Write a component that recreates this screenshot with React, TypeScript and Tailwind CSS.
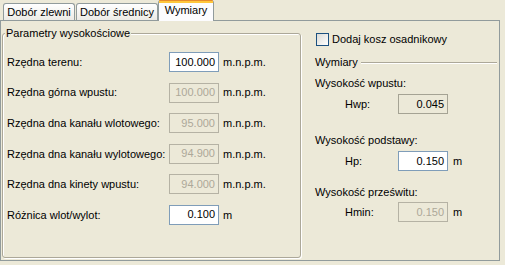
import React from "react";

const Field = ({ value, mode }: { value: string; mode: "edit" | "disabled" | "readonly" }) => {
  const cls =
    mode === "edit"
      ? "bg-white border-[#7F9DB9] text-black"
      : mode === "readonly"
      ? "bg-[#ECE9D8] border-[#A5A394] text-black"
      : "bg-[#ECE9D8] border-[#B5B2A4] text-[#ACA899]";
  return (
    <div className={`w-[50px] h-[20px] border flex items-center justify-end pr-[3px] leading-none ${cls}`}>
      {value}
    </div>
  );
};

const leftRows: { label: string; value: string; mode: "edit" | "disabled"; unit: string }[] = [
  { label: "Rzędna terenu:", value: "100.000", mode: "edit", unit: "m.n.p.m." },
  { label: "Rzędna górna wpustu:", value: "100.000", mode: "disabled", unit: "m.n.p.m." },
  { label: "Rzędna dna kanału wlotowego:", value: "95.000", mode: "disabled", unit: "m.n.p.m." },
  { label: "Rzędna dna kanału wylotowego:", value: "94.900", mode: "disabled", unit: "m.n.p.m." },
  { label: "Rzędna dna kinety wpustu:", value: "94.000", mode: "disabled", unit: "m.n.p.m." },
  { label: "Różnica wlot/wylot:", value: "0.100", mode: "edit", unit: "m" },
];

export default function App() {
  return (
    <div className="w-[505px] h-[265px] bg-[#ECE9D8] text-[11px] text-black [font-family:'Liberation_Sans',Arial,sans-serif] overflow-hidden">
      {/* Tab strip */}
      <div className="h-[20px] flex items-end pl-[3px]">
        <div className="w-[72px] h-[17px] border border-b-0 border-[#919B9C] rounded-t-[3px] bg-gradient-to-b from-white to-[#ECEBE6] flex items-center justify-center leading-none">
          Dobór zlewni
        </div>
        <div className="w-[82px] h-[17px] ml-[1px] border border-b-0 border-[#919B9C] rounded-t-[3px] bg-gradient-to-b from-white to-[#ECEBE6] flex items-center justify-center leading-none">
          Dobór średnicy
        </div>
        <div className="relative z-10 -mb-px w-[56px] h-[21px] border-x border-[#919B9C] rounded-t-[3px] bg-[#FCFCFE] flex flex-col">
          <div className="h-[1px] bg-[#E68B2C] rounded-t-[3px]" />
          <div className="h-[2px] bg-[#FFC73C]" />
          <div className="flex-1 flex items-center justify-center leading-none pb-[3px]">Wymiary</div>
        </div>
      </div>

      {/* Tab panel */}
      <div className="w-[500px] h-[241px] border border-[#919B9C] flex items-start">
        {/* Left group */}
        <div className="relative ml-[1px] mt-[12px] w-[299px] h-[225px] border border-[#ACA899] rounded-[3px] shadow-[inset_1px_1px_0_#fff,1px_1px_0_#fff]">
          <div className="absolute left-[2px] top-[-7px] px-[1px] bg-[#ECE9D8] leading-[13px]">
            Parametry wysokościowe
          </div>
          <div className="pt-[18px] pl-[4px] flex flex-col gap-[10.6px]">
            {leftRows.map((r) => (
              <div key={r.label} className="h-[20px] flex items-center">
                <div className="w-[162px]">{r.label}</div>
                <Field value={r.value} mode={r.mode} />
                <div className="ml-[4px]">{r.unit}</div>
              </div>
            ))}
          </div>
        </div>

        {/* Right column */}
        <div className="flex-1 mt-[12px] flex flex-col">
          <div className="h-[13px] ml-[15px] flex items-center">
            <div className="w-[13px] h-[13px] border border-[#1C5180] bg-gradient-to-br from-[#DCDCD7] to-white" />
            <div className="ml-[3px] leading-none">Dodaj kosz osadnikowy</div>
          </div>

          <div className="h-[13px] mt-[10px] ml-[14px] mr-[2px] flex items-center">
            <div className="leading-none">Wymiary</div>
            <div className="flex-1 ml-[3px] h-[2px] border-t border-[#ACA899] bg-white" />
          </div>

          <div className="h-[13px] mt-[8px] ml-[14px] leading-[13px]">Wysokość wpustu:</div>
          <div className="h-[20px] mt-[4px] pl-[44px] flex items-center">
            <div className="w-[53px]">Hwp:</div>
            <Field value="0.045" mode="readonly" />
          </div>

          <div className="h-[13px] mt-[20px] ml-[14px] leading-[13px]">Wysokość podstawy:</div>
          <div className="h-[20px] mt-[4px] pl-[44px] flex items-center">
            <div className="w-[53px]">Hp:</div>
            <Field value="0.150" mode="edit" />
            <div className="ml-[5px]">m</div>
          </div>

          <div className="h-[13px] mt-[15px] ml-[14px] leading-[13px]">Wysokość prześwitu:</div>
          <div className="h-[20px] mt-[3px] pl-[44px] flex items-center">
            <div className="w-[53px]">Hmin:</div>
            <Field value="0.150" mode="disabled" />
            <div className="ml-[5px]">m</div>
          </div>
        </div>
      </div>
    </div>
  );
}
